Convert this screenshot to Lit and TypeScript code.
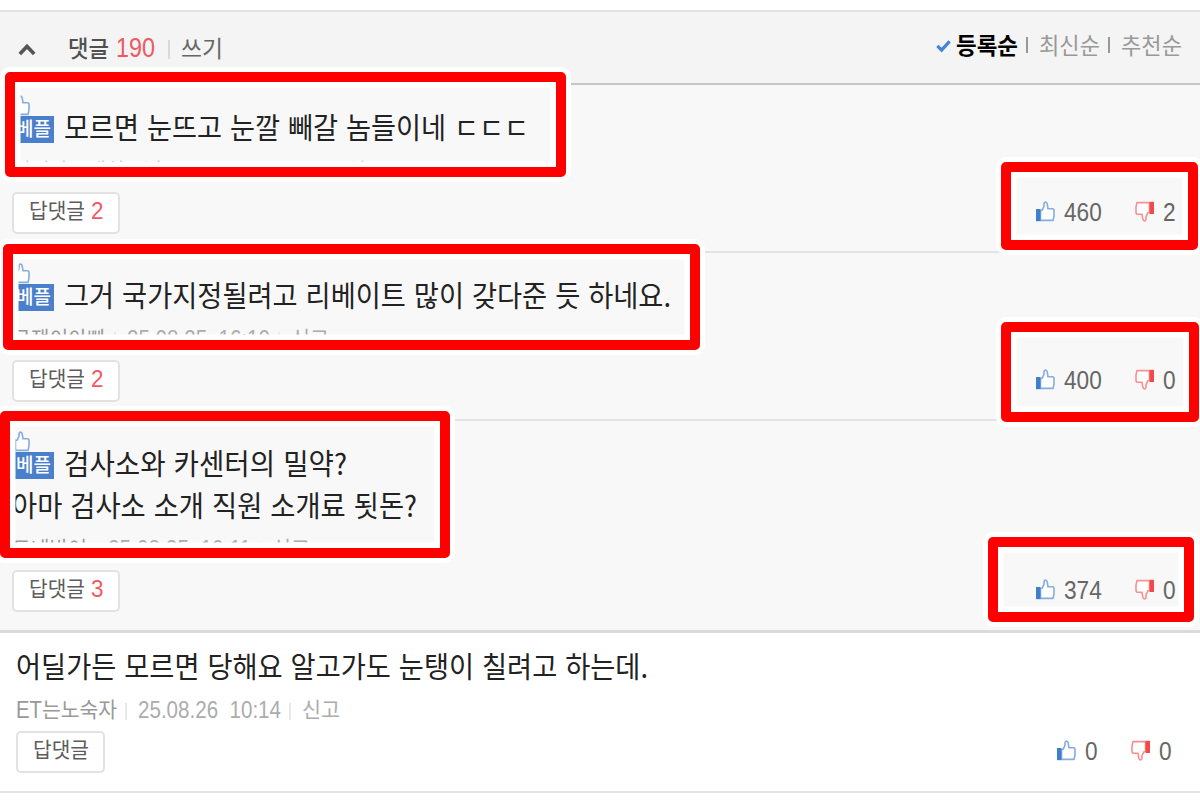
import { LitElement, html, css, svg, nothing } from 'lit';
import { customElement, property } from 'lit/decorators.js';

interface Comment {
  lines: [string, number][];
  author: [string, number][];
  date: string;
  time: string;
  replies?: number;
  up: number;
  down: number;
  best?: boolean;
}

interface Frame {
  x: number;
  y: number;
  w: number;
  h: number;
}

const COMMENTS: Comment[] = [
  {
    lines: [['모르면 눈뜨고 눈깔 빼갈 놈들이네 ㄷㄷㄷ', 465]],
    author: [['비련파크네히스님', 150]],
    date: '25.08.25',
    time: '10:10',
    replies: 2,
    up: 460,
    down: 2,
    best: true,
  },
  {
    lines: [['그거 국가지정될려고 리베이트 많이 갖다준 듯 하네요.', 607]],
    author: [['규쟁이아빠', 94]],
    date: '25.08.25',
    time: '16:10',
    replies: 2,
    up: 400,
    down: 0,
    best: true,
  },
  {
    lines: [
      ['검사소와 카센터의 밀약?', 283],
      ['아마 검사소 소개 직원 소개료 됫돈?', 405],
    ],
    author: [['드네방어', 75]],
    date: '25.08.25',
    time: '10:11',
    replies: 3,
    up: 374,
    down: 0,
    best: true,
  },
  {
    lines: [['어딜가든 모르면 당해요 알고가도 눈탱이 칠려고 하는데.', 632]],
    author: [['ET', 26], ['는노숙자', 75]],
    date: '25.08.26',
    time: '10:14',
    up: 0,
    down: 0,
  },
];

// Marker frames drawn over the list
const FRAMES: Frame[] = [
  { x: 5, y: 72, w: 561, h: 105 },
  { x: 3, y: 244, w: 697, h: 106 },
  { x: 0, y: 411, w: 450, h: 147 },
  { x: 1001, y: 162, w: 197, h: 88 },
  { x: 1001, y: 322, w: 198, h: 100 },
  { x: 988, y: 537, w: 206, h: 85 },
];

/**
 * A run of text squeezed or stretched to a fixed width.
 *
 * @element fit-text
 */
@customElement('fit-text')
export class FitText extends LitElement {
  static styles = css`
    :host {
      display: inline-block;
      flex-shrink: 0;
      white-space: pre;
    }

    .run {
      display: inline-block;
      transform-origin: 0 50%;
    }
  `;

  @property() text = '';
  @property({ type: Number }) width = 0;

  render() {
    return html`<span class="run">${this.text}</span>`;
  }

  updated() {
    const run = this.renderRoot.querySelector<HTMLElement>('.run')!;
    const natural = run.getBoundingClientRect().width;
    this.style.width = `${this.width}px`;
    if (natural) {
      run.style.transform = `scaleX(${this.width / natural})`;
    }
  }
}

/**
 * Thumb icon, pointing up (like) or down (dislike).
 *
 * @element thumb-icon
 */
@customElement('thumb-icon')
export class ThumbIcon extends LitElement {
  static styles = css`
    :host {
      display: block;
      width: 19px;
      height: 21px;
      flex-shrink: 0;
      --bar: #3f7ecb;
      --line: #86abe0;
    }

    :host([down]) {
      transform: rotate(180deg);
      --bar: #f04a4a;
      --line: #f79090;
    }

    svg {
      display: block;
    }

    .bar {
      fill: var(--bar);
    }

    .hand {
      fill: #fff;
      stroke: var(--line);
      stroke-width: 1.6;
      stroke-linejoin: round;
    }
  `;

  render() {
    return html`
      <svg width="19" height="21" viewBox="0 0 19 21">
        ${svg`
          <path class="hand" d="M4.5 9.2H6.2L8 5.4V2.6Q8.4 1 9.5 1 10.7 1.2 11.2 3L12 7.8H17L18 9V15L17 19.4H4.5Z" />
          <path class="bar" d="M0 8H4.4V20.2H0Z" />
        `}
      </svg>
    `;
  }
}

@customElement('app-root')
export class AppRoot extends LitElement {
  static styles = css`
    :host {
      display: block;
      position: relative;
      width: 1200px;
      height: 800px;
      overflow: hidden;
      box-sizing: border-box;
      padding-top: 10px;
      background: #fff;
      font-family: 'Noto Sans CJK KR', sans-serif;
      color: #222;
    }

    .header {
      display: flex;
      align-items: center;
      box-sizing: border-box;
      height: 75px;
      padding: 0 18px;
      background: #f4f4f4;
      border-top: 2px solid #e2e2e2;
      border-bottom: 2px solid #c6c6c6;
      font-size: 23px;
      line-height: 32px;
    }

    .chevron {
      margin: 4px 32px 0 0;
    }

    .title {
      font-weight: 500;
      color: #505050;
      margin: -2px 7px 0 0;
    }

    .digits {
      font-family: 'Liberation Sans', sans-serif;
    }

    .total {
      font-size: 28px;
      color: #f0595f;
    }

    .write {
      margin-top: -2px;
      color: #666;
    }

    .bar {
      width: 2px;
      height: 19px;
      background: #dadada;
      margin: 4px 11px 0 13px;
    }

    .sort {
      display: flex;
      align-items: center;
      margin: -8px 0 0 auto;
      color: #999;
    }

    .check {
      margin: 5px 5px 0 0;
    }

    .current {
      font-weight: 700;
      color: #000;
    }

    .sort .bar {
      height: 16px;
      background: #999;
      margin: 3px 11px 0 8px;
    }

    .comment {
      padding: 22px 24px 17px 12px;
      background: #f8f8f8;
      border-bottom: 2px solid #e3e3e3;
    }

    .comment.last-best {
      padding-bottom: 18px;
      border-bottom: 3px solid #dbdbdb;
    }

    .comment.plain {
      padding: 13px 28px 18px 16px;
      background: #fff;
    }

    .line {
      display: flex;
      align-items: center;
      height: 42px;
      font-size: 29px;
      line-height: 38px;
    }

    .body {
      margin-top: -4px;
      word-spacing: 2px;
    }

    .badge {
      width: 42px;
      height: 27px;
      margin-right: 10px;
      display: flex;
      flex-direction: column;
    }

    .badge thumb-icon {
      margin-top: -20px;
      margin-left: -1px;
    }

    .badge-label {
      height: 27px;
      flex-shrink: 0;
      padding-left: 4px;
      background: #4a80cb;
      color: #fff;
      font-size: 19px;
      font-weight: 500;
      line-height: 23px;
    }

    .meta {
      display: flex;
      align-items: center;
      height: 43px;
      font-size: 21px;
      line-height: 32px;
      color: #999;
    }

    .meta .hangul {
      margin-top: -3px;
    }

    .meta .digits {
      font-size: 24px;
    }

    .meta .when {
      color: #acacac;
    }

    .meta .bar {
      background: #e8e8e8;
      height: 17px;
      margin: 3px 11px 0 8px;
    }

    .actions {
      display: flex;
      align-items: center;
      justify-content: space-between;
      height: 42px;
    }

    .reply {
      display: flex;
      align-items: center;
      gap: 6px;
      box-sizing: border-box;
      height: 42px;
      padding: 0 14px 5px 15px;
      border: 2px solid #e2e2e2;
      border-radius: 5px;
      background: #fff;
      color: #5c5c5c;
      font-size: 21px;
      line-height: 32px;
    }

    .reply .hangul {
      margin-top: -3px;
    }

    .reply .digits {
      font-size: 24px;
      color: #f0595f;
    }

    .votes {
      display: flex;
      align-items: center;
      margin-top: -3px;
      font-size: 25px;
      line-height: 32px;
      color: #666;
    }

    .votes thumb-icon {
      margin-right: 9px;
    }

    .votes thumb-icon[down] {
      margin-left: 34px;
    }

    .frame {
      position: absolute;
      box-sizing: border-box;
      border: 10px solid #f00;
      border-radius: 5px;
      box-shadow: 0 0 0 5px #fff, inset 0 0 0 5.5px #fff;
    }
  `;

  private fit(text: string | number, width: number, cls = '') {
    return html`<fit-text class=${cls} .text=${String(text)} .width=${width}></fit-text>`;
  }

  private renderHeader() {
    return html`
      <div class="header">
        <svg class="chevron" width="18" height="13" viewBox="0 0 18 13">
          <path d="M1.8 11 9 3.4 16.2 11" fill="none" stroke="#555" stroke-width="3.6" />
        </svg>
        ${this.fit('댓글', 41, 'title')}
        ${this.fit('190', 39, 'digits total')}
        <span class="bar"></span>
        ${this.fit('쓰기', 42, 'write')}
        <div class="sort">
          <svg class="check" width="15" height="13" viewBox="0 0 15 13">
            <path d="M1.4 5.8 5.6 10.2 13.6 1.4" fill="none" stroke="#4484d2" stroke-width="3.2" />
          </svg>
          ${this.fit('등록순', 62, 'current')}
          <span class="bar"></span>
          ${this.fit('최신순', 61)}
          <span class="bar"></span>
          ${this.fit('추천순', 61)}
        </div>
      </div>
    `;
  }

  private renderVotes(c: Comment) {
    const width = (n: number) => String(n).length * 12.6;
    return html`
      <div class="votes">
        <thumb-icon></thumb-icon>
        ${this.fit(c.up, width(c.up), 'digits')}
        <thumb-icon down></thumb-icon>
        ${this.fit(c.down, width(c.down), 'digits')}
      </div>
    `;
  }

  private renderComment(c: Comment, i: number) {
    const lastBest = c.best && !COMMENTS[i + 1]?.best;
    const kind = !c.best ? 'plain' : lastBest ? 'last-best' : '';
    return html`
      <div class="comment ${kind}">
        ${c.lines.map(
          ([text, width], n) => html`
            <div class="line">
              ${c.best && n === 0
                ? html`
                    <span class="badge">
                      <thumb-icon></thumb-icon>
                      <span class="badge-label">${this.fit('베플', 35)}</span>
                    </span>
                  `
                : nothing}
              ${this.fit(text, width, 'body')}
            </div>
          `
        )}
        <div class="meta">
          ${c.author.map(([text, width]) =>
            this.fit(text, width, text === 'ET' ? 'digits' : 'hangul')
          )}
          <span class="bar"></span>
          ${this.fit(`${c.date}  ${c.time}`, 143, 'digits when')}
          <span class="bar"></span>
          ${this.fit('신고', 38, 'hangul when')}
        </div>
        <div class="actions">
          <div class="reply">
            ${this.fit('답댓글', 56, 'hangul')}
            ${c.replies ? this.fit(c.replies, 12.5, 'digits') : nothing}
          </div>
          ${this.renderVotes(c)}
        </div>
      </div>
    `;
  }

  render() {
    return html`
      ${this.renderHeader()}
      ${COMMENTS.map((c, i) => this.renderComment(c, i))}
      ${FRAMES.map(
        (f) => html`
          <div
            class="frame"
            style="left:${f.x}px;top:${f.y}px;width:${f.w}px;height:${f.h}px"
          ></div>
        `
      )}
    `;
  }
}
